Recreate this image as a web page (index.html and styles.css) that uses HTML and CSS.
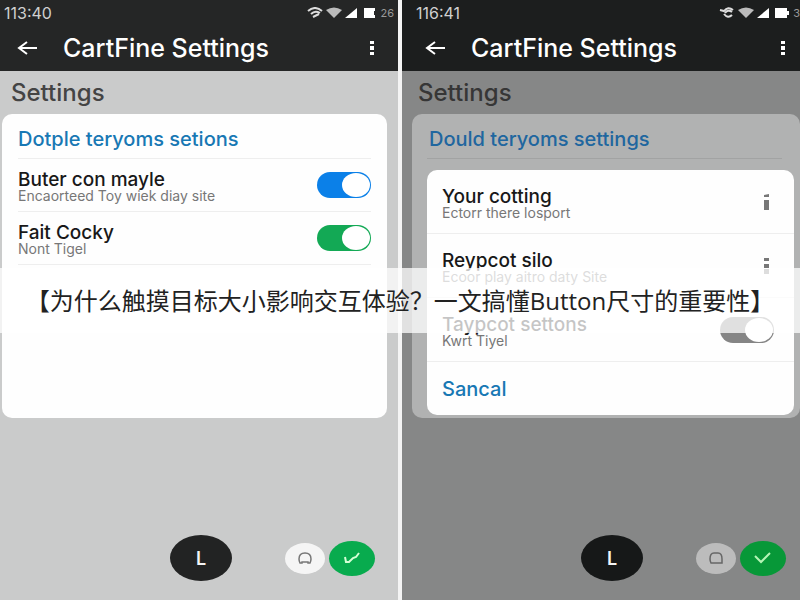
FILE: index.html
```
<!DOCTYPE html>
<html lang="zh-CN">

<head>
    <meta charset="UTF-8">
    <meta name="viewport" content="width=device-width, initial-scale=1.0">
    <title>CartFine Settings</title>
    <link rel="stylesheet" href="styles.css">
</head>

<body>

    <main class="screens">
        <section class="phone">
            <header class="top">
                <div class="status">
                    <span>113:40</span>
                    <span class="status-icons">
                        <svg width="69" height="12" viewBox="0 0 69 12" fill="none" stroke="#ddd">
                            <path d="M1 4Q8-2 15 4M4 7Q8 3 13 6M6 10L12 7" stroke-width="2" />
                            <path d="M19 3Q27-2 35 3L27 11Z" fill="#bbb" stroke="none" />
                            <path d="M38 11L50 1V11Z" fill="#fff" stroke="none" />
                            <path d="M57 1H68V4H67V8H68V11H57Z" fill="#fff" stroke="none" />
                        </svg>
                        <small>26</small>
                    </span>
                </div>
                <div class="bar">
                    <button type="button" class="icon-btn" aria-label="Back">
                        <svg width="20" height="16" viewBox="0 0 20 16" fill="none" stroke="#fff" stroke-width="2">
                            <path d="M20 8H2M10 2L2 8L10 14" />
                        </svg>
                    </button>
                    <h1>CartFine Settings</h1>
                    <button type="button" class="icon-btn" aria-label="More">
                        <svg width="6" height="16" viewBox="0 0 6 16" fill="#fff">
                            <path d="M1 1h4v3H1zM1 6h4v4H1zM1 12h4v3H1z" />
                        </svg>
                    </button>
                </div>
            </header>
            <h2>Settings</h2>
            <div class="card">
                <h3>Dotple teryoms setions</h3>
                <div class="row">
                    <label class="text" for="buter">
                        <strong>Buter con mayle</strong>
                        <span>Encaorteed Toy wiek diay site</span>
                    </label>
                    <input type="checkbox" class="toggle blue" id="buter" checked>
                </div>
                <div class="row">
                    <label class="text" for="fait">
                        <strong>Fait Cocky</strong>
                        <span>Nont Tigel</span>
                    </label>
                    <input type="checkbox" class="toggle green" id="fait" checked>
                </div>
            </div>
            <footer class="actions">
                <button type="button" class="fab dark">L</button>
                <button type="button" class="fab light" aria-label="Home">
                    <svg width="16" height="12" viewBox="0 0 16 12" fill="none" stroke="#777" stroke-width="1.5">
                        <path d="M3 11Q2 9 2 7Q2 1 8 1Q14 1 14 7Q14 9 13 11H11V10H5V11Z" />
                    </svg>
                </button>
                <button type="button" class="fab ok" aria-label="Done">
                    <svg width="18" height="14" viewBox="0 0 18 14" fill="none" stroke="#d5ffd5" stroke-width="2">
                        <path d="M2 6L3 11L6 11L10 7L13 6L16 2" />
                    </svg>
                </button>
            </footer>
        </section>

        <section class="phone dimmed">
            <header class="top">
                <div class="status">
                    <span>116:41</span>
                    <span class="status-icons">
                        <svg width="70" height="12" viewBox="0 0 70 12" fill="none" stroke="#ddd">
                            <path d="M1 3L5 4Q9-1 14 3M6 6Q9 2 13 5M5 7Q9 12 13 8" stroke-width="2" />
                            <path d="M19 3Q27-2 35 3L27 11Z" fill="#bbb" stroke="none" />
                            <path d="M38 11L50 1V11Z" fill="#fff" stroke="none" />
                            <path d="M56 1H68V4H70V8H68V11H56Z" fill="#fff" stroke="none" />
                        </svg>
                        <small>3</small>
                    </span>
                </div>
                <div class="bar">
                    <button type="button" class="icon-btn" aria-label="Back">
                        <svg width="20" height="16" viewBox="0 0 20 16" fill="none" stroke="#fff" stroke-width="2">
                            <path d="M20 8H2M10 2L2 8L10 14" />
                        </svg>
                    </button>
                    <h1>CartFine Settings</h1>
                    <button type="button" class="icon-btn" aria-label="More">
                        <svg width="6" height="16" viewBox="0 0 6 16" fill="#fff">
                            <path d="M1 1h4v3H1zM1 6h4v4H1zM1 12h4v3H1z" />
                        </svg>
                    </button>
                </div>
            </header>
            <h2>Settings</h2>
            <div class="card">
                <h3>Dould teryoms settings</h3>
                <div class="dialog">
                    <div class="row">
                        <div class="text">
                            <strong>Your cotting</strong>
                            <span>Ectorr there losport</span>
                        </div>
                        <button type="button" class="icon-btn" aria-label="Options">
                            <svg width="6" height="18" viewBox="0 0 6 18" fill="#777">
                                <path d="M0 2L5 1V4H0zM0 7h5v10H0z" />
                            </svg>
                        </button>
                    </div>
                    <div class="row">
                        <div class="text">
                            <strong>Reypcot silo</strong>
                            <span>Ecoor play aitro daty Site</span>
                        </div>
                        <button type="button" class="icon-btn" aria-label="Options">
                            <svg width="6" height="18" viewBox="0 0 6 18" fill="#777">
                                <path d="M0 1h5v3H0zM0 7h5v4H0zM0 12h5v5H0z" />
                            </svg>
                        </button>
                    </div>
                    <div class="row">
                        <label class="text" for="taypcot">
                            <strong>Taypcot settons</strong>
                            <span>Kwrt Tiyel</span>
                        </label>
                        <input type="checkbox" class="toggle" id="taypcot" checked>
                    </div>
                    <button type="button" class="cancel">Sancal</button>
                </div>
            </div>
            <footer class="actions">
                <button type="button" class="fab dark">L</button>
                <button type="button" class="fab light" aria-label="Home">
                    <svg width="16" height="12" viewBox="0 0 16 12" fill="none" stroke="#666" stroke-width="1.5">
                        <path d="M3 11Q2 9 2 7Q2 1 6 1H10Q14 1 14 7V11Z" />
                    </svg>
                </button>
                <button type="button" class="fab ok" aria-label="Done">
                    <svg width="18" height="14" viewBox="0 0 18 14" fill="none" stroke="#b5f5b5" stroke-width="2">
                        <path d="M1 5L7 11L16 2" />
                    </svg>
                </button>
            </footer>
        </section>
    </main>

    <!-- Title strip over both screens -->
    <div class="banner">【为什么触摸目标大小影响交互体验？一文搞懂Button尺寸的重要性】</div>

</body>

</html>
```
FILE: styles.css
```
* {
    box-sizing: border-box;
}

body {
    margin: 0;
    position: relative;
    font-family: Inter, "Liberation Sans", sans-serif;
}

h1,
h2,
h3 {
    margin: 0;
    font-weight: 500;
}

button {
    border: none;
    padding: 0;
    background: none;
    font-family: inherit;
    cursor: pointer;
}

.screens {
    display: grid;
    grid-template-columns: 1fr 1fr;
    gap: 4px;
    min-height: 100vh;
    background-color: #f4f4f4;
}

.phone {
    display: flex;
    flex-direction: column;
    overflow: hidden;
    background-color: #cacbcb;
}

.dimmed {
    background-color: #868787;
}

/* Status and title bar */
.top {
    height: 71px;
    background-color: #252626;
    color: #fff;
}

.dimmed .top {
    background-color: #1c1e1e;
}

.status {
    display: flex;
    justify-content: space-between;
    align-items: center;
    height: 26px;
    padding: 0 4px;
    font-size: 16px;
    color: #d0d0d0;
}

.dimmed .status {
    padding: 0 0 0 14px;
}

.status-icons {
    display: flex;
    align-items: center;
    gap: 4px;
}

.status-icons small {
    font-size: 11px;
    color: #999;
}

.bar {
    display: flex;
    align-items: center;
    height: 43px;
    padding: 0 23px 0 17px;
}

.dimmed .bar {
    padding: 0 14px 0 23px;
}

.bar h1 {
    flex: 1;
    margin-left: 26px;
    font-size: 25px;
    line-height: 28px;
}

.icon-btn {
    display: flex;
}

h2 {
    padding: 0 11px;
    font-size: 24px;
    line-height: 43px;
    color: #444;
}

.dimmed h2 {
    padding: 0 16px;
    color: #363636;
}

.card {
    min-height: 304px;
    margin: 0 11px 0 2px;
    padding: 0 16px;
    border-radius: 10px;
    background-color: #fefefe;
}

.dimmed .card {
    margin: 0 0 0 10px;
    padding: 0 6px 3px 15px;
    background-color: #b1b2b2;
}

h3 {
    height: 45px;
    font-size: 20px;
    line-height: 50px;
    color: #1878b4;
    border-bottom: 1px solid #eee;
}

.dimmed h3 {
    margin: 0 12px 11px 0;
    padding-left: 2px;
    border-color: #a2a3a3;
    color: #20669f;
}

.row {
    display: flex;
    justify-content: space-between;
    align-items: center;
    height: 53px;
    border-bottom: 1px solid #eee;
}

.text {
    padding-top: 3px;
}

.row strong,
.row span {
    display: block;
}

.row strong {
    font-size: 19px;
    font-weight: 500;
    line-height: 19px;
    color: #181818;
}

.row span {
    font-size: 14px;
    line-height: 14px;
    color: #777;
}

.dialog {
    border-radius: 10px;
    background-color: #fefefe;
}

.dialog .row {
    height: 64px;
    padding: 0 20px 0 15px;
}

.dialog .row .icon-btn {
    margin-right: 4px;
}

.cancel {
    display: block;
    width: 100%;
    height: 53px;
    padding: 0 15px;
    text-align: left;
    font-size: 20px;
    font-weight: 500;
    color: #1878b4;
}

/* Switches */
.toggle {
    appearance: none;
    display: flex;
    justify-content: flex-end;
    width: 54px;
    height: 26px;
    margin: 0;
    padding: 1px;
    border-radius: 13px;
    background-color: #858585;
}

.toggle::before {
    content: "";
    width: 28px;
    height: 24px;
    border-radius: 50%;
    background-color: #fff;
}

.blue {
    background-color: #0b80e8;
}

.green {
    background-color: #13a955;
}

/* Bottom round buttons */
.actions {
    display: flex;
    align-items: center;
    gap: 4px;
    margin-top: auto;
    padding: 0 23px 19px;
    justify-content: flex-end;
}

.dimmed .actions {
    padding-right: 14px;
}

.fab {
    display: flex;
    align-items: center;
    justify-content: center;
    border-radius: 50%;
}

.dark {
    width: 62px;
    height: 46px;
    margin-right: 49px;
    background-color: #222323;
    color: #f4f4f4;
    font-size: 18px;
    font-weight: 600;
}

.light {
    width: 40px;
    height: 31px;
    background-color: #f5f5f5;
}

.ok {
    width: 46px;
    height: 35px;
    background-color: #08ab4e;
}

.dimmed .dark {
    background-color: #161818;
}

.dimmed .light {
    background-color: #bcbcbc;
}

.dimmed .ok {
    background-color: #079838;
}

.banner {
    position: absolute;
    top: 268px;
    left: 0;
    right: 0;
    background-color: rgba(255, 255, 255, 0.75);
    color: #222;
    font-family: "Open Sans", "Noto Sans CJK SC", sans-serif;
    font-size: 24px;
    line-height: 65px;
    text-align: center;
    white-space: nowrap;
}
```
